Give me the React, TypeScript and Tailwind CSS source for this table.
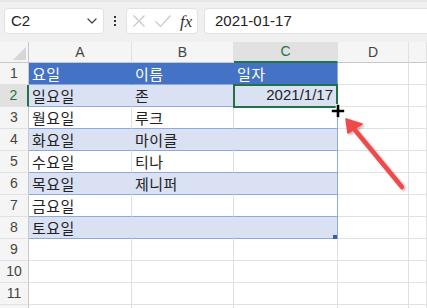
import React from 'react';

const rowsData: Record<number, string[]> = {
    1: ['요일', '이름', '일자'],
    2: ['일요일', '존', ''],
    3: ['월요일', '루크', ''],
    4: ['화요일', '마이클', ''],
    5: ['수요일', '티나', ''],
    6: ['목요일', '제니퍼', ''],
    7: ['금요일', '', ''],
    8: ['토요일', '', ''],
};

const cols = ['A', 'B', 'C', 'D', ''];

function cellClass(row: number, col: number) {
    // col: 0 = A ... 4 = E
    if (row > 8 || col > 2) return 'bg-white border-r border-b border-r-[#e1e1e1] border-b-[#e1e1e1]';
    const edge = col === 2;
    if (row === 1) {
        return edge
            ? 'bg-[#4472c4] text-white border-r border-b border-r-[#8ea9db] border-b-[#8ea9db]'
            : 'bg-[#4472c4] text-white border-r border-b border-r-[#4472c4] border-b-[#8ea9db]';
    }
    if (row % 2 === 0) {
        return edge
            ? 'bg-[#d9e1f2] border-r border-b border-r-[#8ea9db] border-b-[#8ea9db]'
            : 'bg-[#d9e1f2] border-r border-b border-r-[#d9e1f2] border-b-[#8ea9db]';
    }
    return edge
        ? 'bg-white border-r border-b border-r-[#8ea9db] border-b-[#8ea9db]'
        : 'bg-white border-r border-b border-r-[#e1e1e1] border-b-[#8ea9db]';
}

function Toolbar() {
    return (
        <div className="flex h-[42px] items-start bg-[#f0f0f0] pt-[8px] pl-[4px] border-t-2 border-t-[#e6e6e6]">
            {/* Name box */}
            <div className="flex h-[26px] w-[100px] items-center justify-between rounded-[4px] border border-[#e2e2e2] bg-white pl-[6px] pr-[6px] -mt-[2px]">
                <span className="text-[15px] text-[#222]">C2</span>
                <svg width="10" height="6" viewBox="0 0 10 6" fill="none">
                    <path d="M1 1l4 4 4-4" stroke="#444" strokeWidth="1.3" strokeLinecap="round" strokeLinejoin="round" />
                </svg>
            </div>

            {/* Dots */}
            <div className="flex h-[26px] w-[22px] flex-col items-center justify-center gap-[2px] -mt-[2px]">
                <span className="h-[2px] w-[2px] bg-[#333]" />
                <span className="h-[2px] w-[2px] bg-[#333]" />
                <span className="h-[2px] w-[2px] bg-[#333]" />
            </div>

            {/* Cancel / Enter / fx */}
            <div className="flex h-[26px] w-[72px] items-center rounded-[4px] border border-[#e2e2e2] bg-white pl-[5px] -mt-[2px]">
                <svg width="14" height="14" viewBox="0 0 14 14" fill="none">
                    <path d="M1.5 1.5l11 11M12.5 1.5l-11 11" stroke="#c8c8c8" strokeWidth="1.2" />
                </svg>
                <svg width="18" height="14" viewBox="0 0 18 14" fill="none" className="ml-[8px]">
                    <path d="M1.5 7.5l5 5L16.5 1.5" stroke="#c8c8c8" strokeWidth="1.2" />
                </svg>
                <span className="ml-[8px] font-['Liberation_Serif',serif] text-[17px] italic leading-none text-[#333]">
                    fx
                </span>
            </div>

            {/* Formula bar */}
            <div className="ml-[6px] flex h-[26px] flex-1 items-center rounded-l-[4px] border border-r-0 border-[#e2e2e2] bg-white pl-[10px] -mt-[2px]">
                <span className="text-[15px] text-[#222]">2021-01-17</span>
            </div>
        </div>
    );
}

function Sheet() {
    return (
        <div className="grid grid-cols-[29px_103px_102px_104px_71px_18px]">
            {/* Column headers */}
            <div className="relative h-[21px] border-r border-b border-r-[#c8c8c8] border-b-[#c8c8c8] bg-[#f5f5f5]">
                <svg width="13" height="13" viewBox="0 0 13 13" className="absolute right-[2px] bottom-[2px]">
                    <path d="M13 0V13H0Z" fill="#d6d6d6" />
                </svg>
            </div>
            {cols.map((c, i) =>
                i === 2 ? (
                    <div
                        key={c}
                        className="flex h-[21px] items-center justify-center border-r border-b-2 border-r-[#e1e1e1] border-b-[#217346] bg-[#e1e1e1] text-[14px] text-[#217346]"
                    >
                        {c}
                    </div>
                ) : (
                    <div
                        key={i}
                        className="flex h-[21px] items-center justify-center border-r border-b border-r-[#e1e1e1] border-b-[#c8c8c8] bg-[#f5f5f5] text-[14px] text-[#444]"
                    >
                        {c}
                    </div>
                ),
            )}

            {/* Rows (row 12 only peeks in at the bottom edge) */}
            {Array.from({ length: 12 }, (_, r) => r + 1).map((row) => (
                <React.Fragment key={row}>
                    {row === 2 ? (
                        <div className="flex h-[22px] items-center justify-center border-r-2 border-b border-r-[#217346] border-b-[#e1e1e1] bg-[#e1e1e1] text-[14px] text-[#217346]">
                            {row}
                        </div>
                    ) : (
                        <div className="flex h-[22px] items-center justify-center border-r border-b border-r-[#c8c8c8] border-b-[#e1e1e1] bg-[#f5f5f5] text-[14px] text-[#444]">
                            {row < 12 ? row : ''}
                        </div>
                    )}
                    {cols.map((_, col) => {
                        const text = rowsData[row]?.[col] ?? '';
                        return (
                            <div
                                key={col}
                                className={`flex h-[22px] items-center overflow-hidden pl-[3px] ${cellClass(row, col)}`}
                            >
                                {row === 2 && col === 2 ? (
                                    <span className="ml-auto pr-[4px] text-[15px] text-[#222]">2021/1/17</span>
                                ) : (
                                    <span className="font-['Noto_Sans_CJK_KR',sans-serif] text-[15px] leading-[21px] tracking-[0.5px]">
                                        {text}
                                    </span>
                                )}
                            </div>
                        );
                    })}
                </React.Fragment>
            ))}
        </div>
    );
}

export default function App() {
    return (
        <div className="relative h-[308px] w-[427px] overflow-hidden bg-white font-['Liberation_Sans',sans-serif] text-[#222]">
            <Toolbar />
            <Sheet />

            {/* Selected cell C2 */}
            <div className="absolute left-[233px] top-[84px] h-[24px] w-[105px] border-2 border-[#217346]" />

            {/* Table resize handle */}
            <div className="absolute left-[333px] top-[235px] h-[4px] w-[4px] bg-[#3b5cb8]" />

            {/* Fill cursor */}
            <svg width="14" height="14" viewBox="0 0 14 14" className="absolute left-[331px] top-[104px]">
                <path d="M7 0v14M0 7h14" stroke="white" strokeWidth="4.5" />
                <path d="M7 0.8v12.4M0.8 7h12.4" stroke="black" strokeWidth="2.6" />
            </svg>

            {/* Arrow */}
            <svg width="80" height="90" viewBox="0 0 80 90" className="absolute left-[335px] top-[110px]">
                <defs>
                    <filter id="sh" x="-30%" y="-30%" width="160%" height="160%">
                        <feDropShadow dx="1.5" dy="1.5" stdDeviation="1.2" floodColor="#000" floodOpacity="0.3" />
                    </filter>
                </defs>
                <g filter="url(#sh)">
                    <path d="M67 77L20 20" stroke="#f04a4c" strokeWidth="4.5" strokeLinecap="round" />
                    <path d="M11 9L27 14L13 23Z" fill="#f04a4c" stroke="#f04a4c" strokeWidth="1.5" strokeLinejoin="round" />
                </g>
            </svg>
        </div>
    );
}
